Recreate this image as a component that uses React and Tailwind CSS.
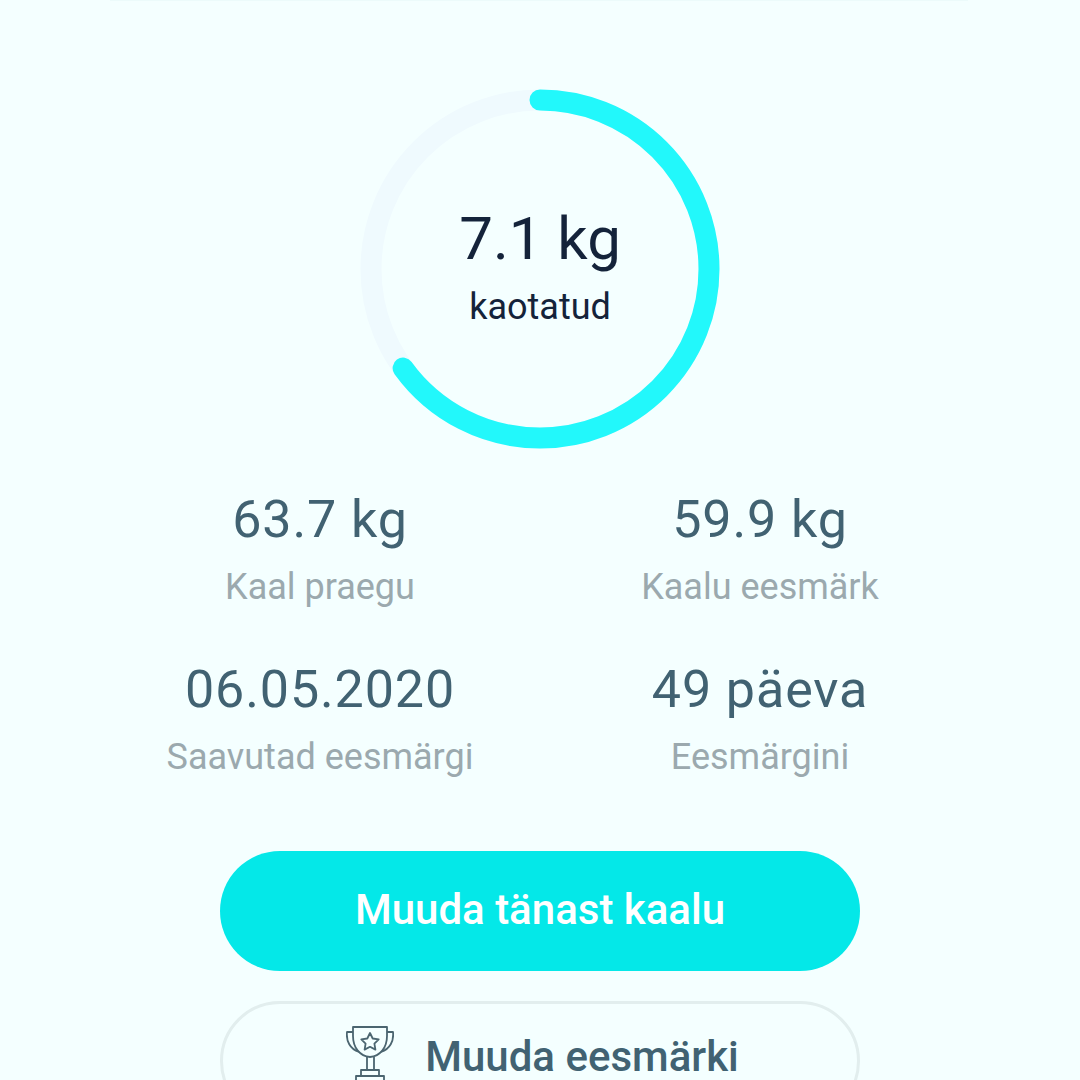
const STATS = [
  { value: '63.7 kg', label: 'Kaal praegu' },
  { value: '59.9 kg', label: 'Kaalu eesmärk' },
  { value: '06.05.2020', label: 'Saavutad eesmärgi' },
  { value: '49 päeva', label: 'Eesmärgini' },
]

// Ring: r=169, progress runs clockwise from 12 o'clock to about 234deg
const RADIUS = 169
const CIRC = 2 * Math.PI * RADIUS
const PROGRESS = 234 / 360

function Ring() {
  return (
    <div className="relative w-[360px] h-[360px]">
      <svg width="360" height="360" viewBox="0 0 360 360" className="absolute inset-0">
        <circle cx="180" cy="180" r={RADIUS} fill="none" stroke="#effafe" strokeWidth="21" />
        <circle
          cx="180"
          cy="180"
          r={RADIUS}
          fill="none"
          stroke="#22f8fb"
          strokeWidth="21"
          strokeLinecap="round"
          strokeDasharray={`${CIRC * PROGRESS} ${CIRC}`}
          transform="rotate(-90 180 180)"
        />
      </svg>
      <div className="absolute inset-0 flex flex-col items-center pt-[110px]">
        <span className="text-[60px] leading-[80px] text-[#14233a]">7.1 kg</span>
        <span className="text-[36px] leading-[48px] mt-[4px] text-[#14233a]">kaotatud</span>
      </div>
    </div>
  )
}

function TrophyIcon() {
  return (
    <svg width="48" height="70" viewBox="0 0 48 70" fill="none" stroke="#4b6570" strokeWidth="1.8" strokeLinejoin="round" className="ml-[5px]">
      <path d="M7 1h34v9c0 12-7 20-17 21C14 30 7 22 7 10z" />
      <path d="M7 6H1c-1 9 3 17 12 20" />
      <path d="M41 6h6c1 9-3 17-12 20" />
      <path d="M24 7l2.700 5.500 6 .9-4.300 4.200 1 6-5.400-2.800-5.400 2.800 1-6-4.300-4.200 6-.9z" />
      <path d="M21 31v13M28 31v13" />
      <path d="M15 50v-6h18v6" />
      <path d="M10 70V50h28v20" />
    </svg>
  )
}

export default function App() {
  return (
    <div className="h-[1080px] w-[1080px] overflow-hidden bg-[#f4ffff] font-['Roboto',sans-serif]">
      <div className="mx-[110px] w-[858px] h-px bg-[#ecfbfb]" />

      <div className="flex justify-center mt-[88px]">
        <Ring />
      </div>

      <div className="grid grid-cols-2 w-[880px] mx-auto mt-[36px] gap-y-[44px]">
        {STATS.map((s) => (
          <div key={s.label} className="flex flex-col items-center">
            <span className="text-[52px] leading-[70px] tracking-[0.9px] text-[#416272]">{s.value}</span>
            <span className="text-[36px] leading-[48px] mt-[8px] text-[#9ba9ae]">{s.label}</span>
          </div>
        ))}
      </div>

      <div className="flex flex-col items-center mt-[70px] gap-[30px]">
        <button className="w-[640px] h-[120px] rounded-[60px] bg-[#04e8e8] pb-[4px] text-white text-[42px] font-medium">
          Muuda tänast kaalu
        </button>
        <button className="shrink-0 w-[640px] h-[120px] rounded-[60px] border-[3px] border-[#e2eeee] flex items-center justify-center gap-[31px] text-[#416272] text-[42px] font-medium">
          <TrophyIcon />
          <span className="mb-[10px]">Muuda eesmärki</span>
        </button>
      </div>
    </div>
  )
}
